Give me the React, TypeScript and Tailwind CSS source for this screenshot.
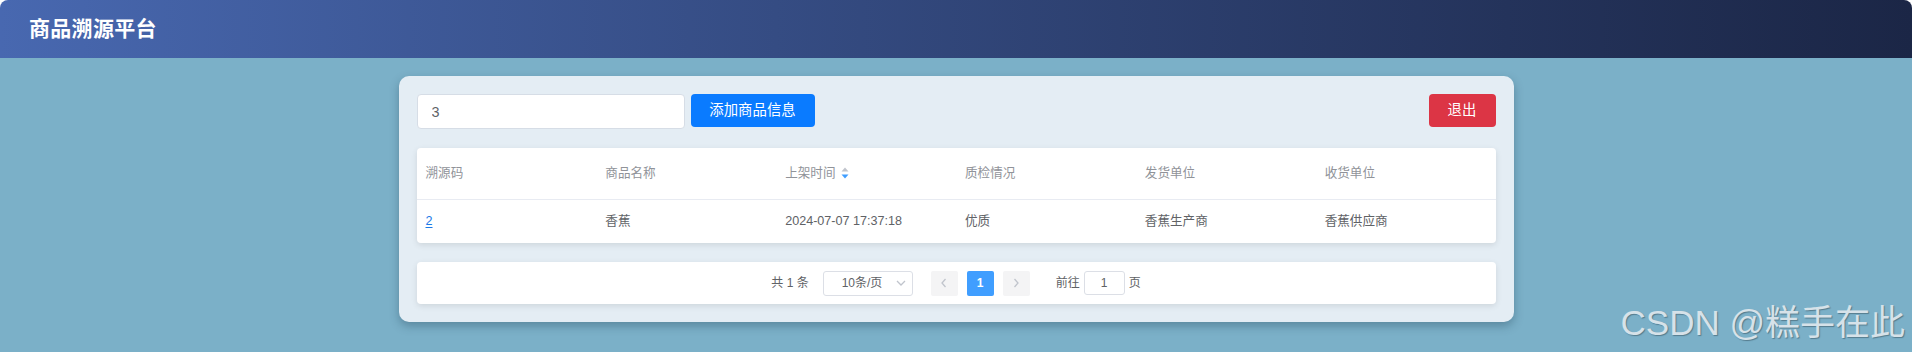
import React from "react";

const font = "font-['Liberation_Sans','Noto_Sans_CJK_SC',sans-serif]";

const columns = ["溯源码", "商品名称", "上架时间", "质检情况", "发货单位", "收货单位"];

const rows = [
  {
    code: "2",
    name: "香蕉",
    time: "2024-07-07 17:37:18",
    quality: "优质",
    sender: "香蕉生产商",
    receiver: "香蕉供应商",
  },
];

function SortCaret() {
  return (
    <svg width="8" height="12" viewBox="0 0 8 12" className="ml-[5px]">
      <path d="M4 0.5 L7.5 4.5 L0.5 4.5 Z" fill="#c0c4cc" />
      <path d="M4 11.5 L7.5 7.5 L0.5 7.5 Z" fill="#409eff" />
    </svg>
  );
}

function Chevron({ dir }: { dir: "left" | "right" | "down" }) {
  const d =
    dir === "left" ? "M6.5 2 L3 6 L6.5 10" : dir === "right" ? "M3.5 2 L7 6 L3.5 10" : "M2 4 L6 8 L10 4";
  return (
    <svg width="10" height="12" viewBox="0 0 10 12" className={dir === "down" ? "w-[12px] h-[12px]" : ""}>
      <path d={d} fill="none" stroke="#c0c4cc" strokeWidth="1.3" />
    </svg>
  );
}

export default function App() {
  return (
    <div className={`relative h-[352px] overflow-hidden bg-white ${font}`}>
      <header className="flex h-[58px] items-center rounded-t-lg bg-gradient-to-r from-[#4868b0] to-[#1b2646] pl-[29px]">
        <h1 className="text-[21px] font-bold tracking-[0.3px] text-white">商品溯源平台</h1>
      </header>

      <main className="h-[294px] bg-[#7bb0c8] pt-[18px]">
        <section className="mx-auto w-[1115px] rounded-[10px] bg-[#e4edf4] p-[18px] shadow-[0_4px_10px_rgba(30,60,80,0.35)]">
          <div className="flex items-start">
            <input
              defaultValue="3"
              className="h-[35px] w-[268px] rounded-[4px] border border-[#d6dde6] bg-white px-[14px] text-[14.4px] text-[#5f6368] outline-none"
            />
            <button className="ml-[6px] h-[33px] w-[124px] rounded-[4px] bg-[#0a7bff] text-[14.4px] text-white">
              添加商品信息
            </button>
            <button className="ml-auto h-[33px] w-[67px] rounded-[4px] bg-[#dc3545] text-[14.4px] text-white">
              退出
            </button>
          </div>

          <div className="mt-[19px] rounded-[4px] bg-white text-[12.6px] shadow-[0_2px_6px_rgba(0,0,0,0.1)]">
            <div className="grid h-[52px] grid-cols-6 items-center border-b border-[#e8ebf2] text-[#909399]">
              {columns.map((c) => (
                <div key={c} className="flex items-center pl-[9px]">
                  {c}
                  {c === "上架时间" ? <SortCaret /> : null}
                </div>
              ))}
            </div>
            {rows.map((r) => (
              <div key={r.code} className="grid h-[43px] grid-cols-6 items-center text-[#606266]">
                <div className="pl-[9px]">
                  <a className="text-[#1a7ae8] underline underline-offset-2">{r.code}</a>
                </div>
                <div className="pl-[9px]">{r.name}</div>
                <div className="pl-[9px]">{r.time}</div>
                <div className="pl-[9px]">{r.quality}</div>
                <div className="pl-[9px]">{r.sender}</div>
                <div className="pl-[9px]">{r.receiver}</div>
              </div>
            ))}
          </div>

          <div className="mt-[19px] flex h-[42px] items-center justify-center rounded-[4px] bg-white text-[12px] text-[#606266] shadow-[0_2px_6px_rgba(0,0,0,0.1)]">
            <span>共 1 条</span>
            <div className="ml-[14px] flex h-[25px] w-[90px] items-center justify-between rounded-[3px] border border-[#dcdfe6] pl-[18px] pr-[6px]">
              <span>10条/页</span>
              <Chevron dir="down" />
            </div>
            <button className="ml-[18px] flex h-[25px] w-[27px] items-center justify-center rounded-[2px] bg-[#f4f4f5]">
              <Chevron dir="left" />
            </button>
            <button className="ml-[9px] flex h-[25px] w-[27px] items-center justify-center rounded-[2px] bg-[#409eff] font-bold text-white">
              1
            </button>
            <button className="ml-[9px] flex h-[25px] w-[27px] items-center justify-center rounded-[2px] bg-[#f4f4f5]">
              <Chevron dir="right" />
            </button>
            <span className="ml-[26px]">前往</span>
            <div className="ml-[4px] flex h-[24px] w-[41px] items-center justify-center rounded-[3px] border border-[#dcdfe6]">
              1
            </div>
            <span className="ml-[4px]">页</span>
          </div>
        </section>
      </main>

      <div className="absolute bottom-[12px] right-[7px] text-[35px] leading-none text-[#d6e2e9] [text-shadow:1px_1px_1px_rgba(40,60,70,0.45)]">
        CSDN @糕手在此
      </div>
    </div>
  );
}
